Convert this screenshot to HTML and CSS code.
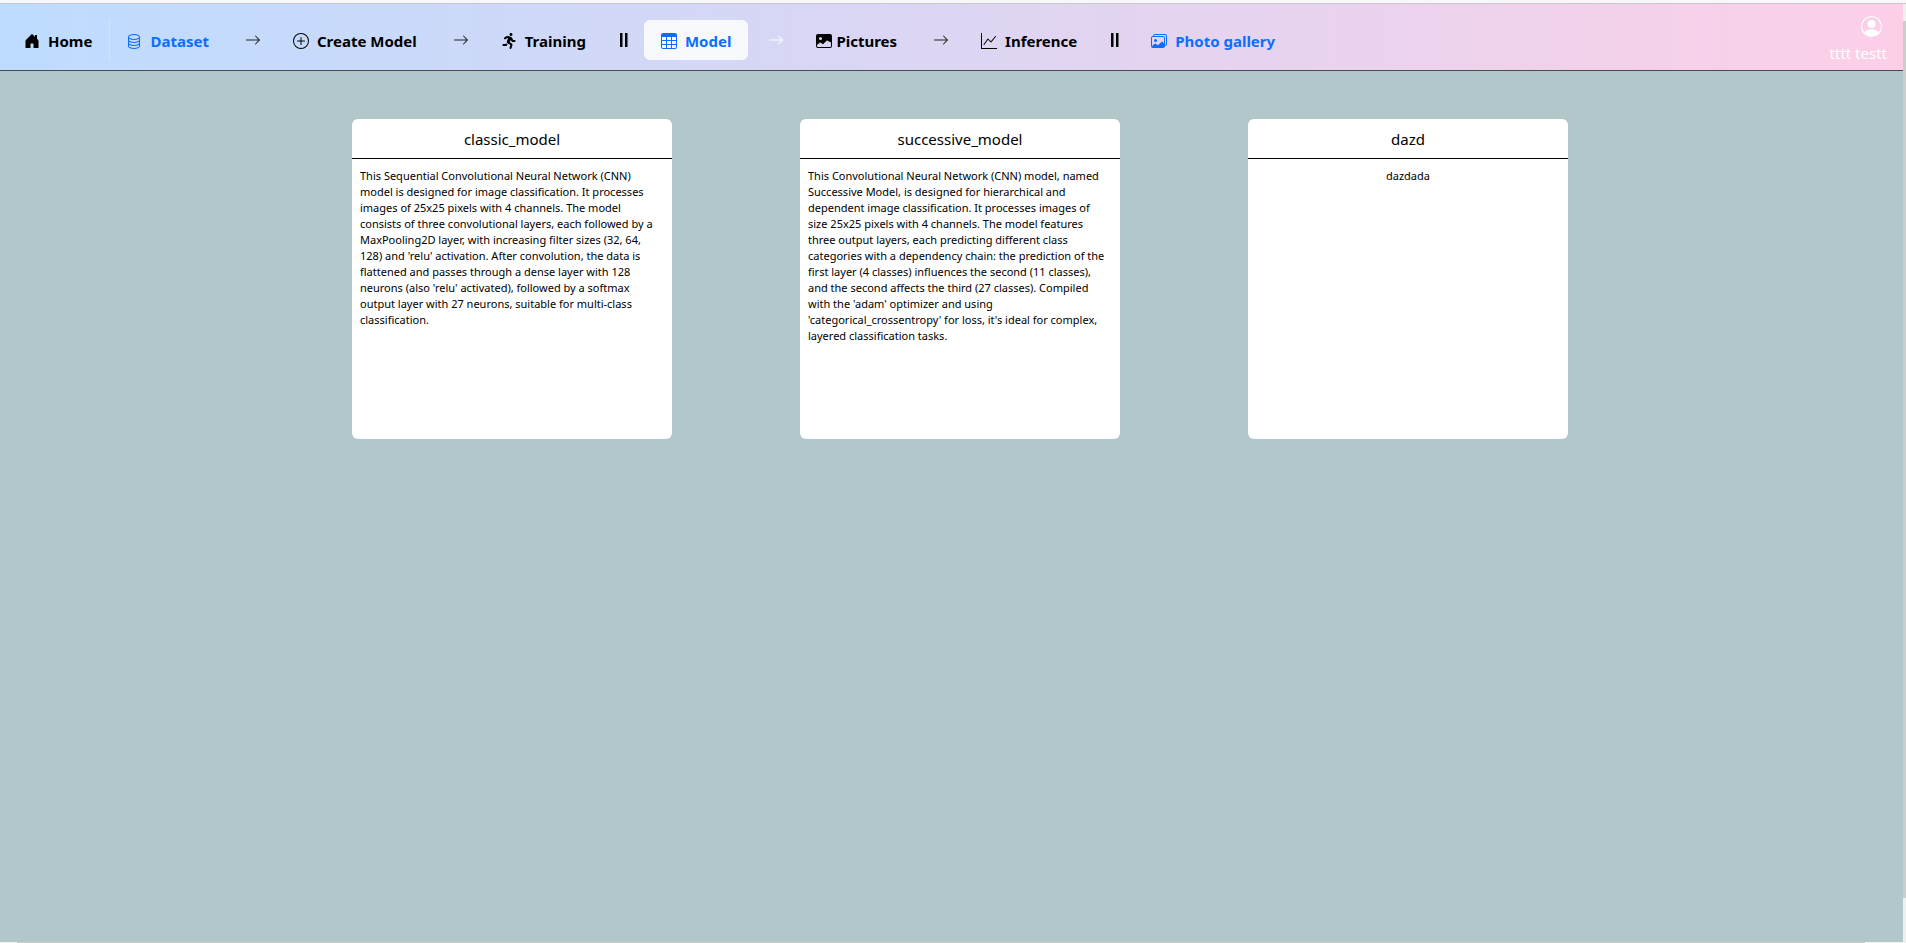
FILE: index.html
```html
<!DOCTYPE html>
<html lang="en">
<head>
<meta charset="utf-8">
<title>Models</title>
<link rel="stylesheet" href="styles.css">
</head>
<body>
<div class="topline"></div>
<div class="viewport">
<div class="page">
<header class="navbar">
  <nav class="nav">
    <a class="link home" href="#"><svg class="icon" viewBox="0 0 16 16"><path d="M6.5 14.5v-3.505c0-.245.25-.495.5-.495h2c.25 0 .5.25.5.5v3.5a.5.5 0 0 0 .5.5h4a.5.5 0 0 0 .5-.5v-7a.5.5 0 0 0-.146-.354L13 5.793V2.5a.5.5 0 0 0-.5-.5h-1a.5.5 0 0 0-.5.5v1.293L8.354 1.146a.5.5 0 0 0-.708 0l-6 6A.5.5 0 0 0 1.5 7.5v7a.5.5 0 0 0 .5.5h4a.5.5 0 0 0 .5-.5Z"/></svg>Home</a>
    <a class="link blue" href="#"><svg class="icon" viewBox="0 0 16 16"><path d="M4.318 2.687C5.234 2.271 6.536 2 8 2s2.766.27 3.682.687C12.644 3.125 13 3.627 13 4c0 .374-.356.875-1.318 1.313C10.766 5.729 9.464 6 8 6s-2.766-.27-3.682-.687C3.356 4.875 3 4.373 3 4c0-.374.356-.875 1.318-1.313ZM13 5.698V7c0 .374-.356.875-1.318 1.313C10.766 8.729 9.464 9 8 9s-2.766-.27-3.682-.687C3.356 7.875 3 7.373 3 7V5.698c.271.202.58.378.904.525C4.978 6.711 6.427 7 8 7s3.022-.289 4.096-.777A4.92 4.92 0 0 0 13 5.698ZM14 4c0-1.007-.875-1.755-1.904-2.223C11.022 1.289 9.573 1 8 1s-3.022.289-4.096.777C2.875 2.245 2 2.993 2 4v9c0 1.007.875 1.755 1.904 2.223C4.978 15.71 6.427 16 8 16s3.022-.289 4.096-.777C13.125 14.755 14 14.007 14 13V4Zm-1 4.698V10c0 .374-.356.875-1.318 1.313C10.766 11.729 9.464 12 8 12s-2.766-.27-3.682-.687C3.356 10.875 3 10.373 3 10V8.698c.271.202.58.378.904.525C4.978 9.71 6.427 10 8 10s3.022-.289 4.096-.777A4.92 4.92 0 0 0 13 8.698Zm0 3V13c0 .374-.356.875-1.318 1.313C10.766 14.729 9.464 15 8 15s-2.766-.27-3.682-.687C3.356 13.875 3 13.373 3 13v-1.302c.271.202.58.378.904.525C4.978 12.71 6.427 13 8 13s3.022-.289 4.096-.777c.324-.147.633-.323.904-.525Z"/></svg>Dataset</a>
    <svg class="icon arrow" viewBox="0 0 16 16"><path fill-rule="evenodd" d="M1 8a.5.5 0 0 1 .5-.5h11.793l-3.147-3.146a.5.5 0 0 1 .708-.708l4 4a.5.5 0 0 1 0 .708l-4 4a.5.5 0 0 1-.708-.708L13.293 8.5H1.5A.5.5 0 0 1 1 8"/></svg>
    <a class="link" href="#"><svg class="icon" viewBox="0 0 16 16"><path d="M8 15A7 7 0 1 1 8 1a7 7 0 0 1 0 14m0 1A8 8 0 1 0 8 0a8 8 0 0 0 0 16"/><path d="M8 4a.5.5 0 0 1 .5.5v3h3a.5.5 0 0 1 0 1h-3v3a.5.5 0 0 1-1 0v-3h-3a.5.5 0 0 1 0-1h3v-3A.5.5 0 0 1 8 4"/></svg>Create Model</a>
    <svg class="icon arrow" viewBox="0 0 16 16"><path fill-rule="evenodd" d="M1 8a.5.5 0 0 1 .5-.5h11.793l-3.147-3.146a.5.5 0 0 1 .708-.708l4 4a.5.5 0 0 1 0 .708l-4 4a.5.5 0 0 1-.708-.708L13.293 8.5H1.5A.5.5 0 0 1 1 8"/></svg>
    <a class="link" href="#"><svg class="icon" viewBox="0 0 416 512"><path d="M272 96c26.510 0 48-21.490 48-48S298.510 0 272 0s-48 21.490-48 48 21.490 48 48 48zM113.690 317.470l-14.800 34.520H32c-17.670 0-32 14.330-32 32s14.330 32 32 32h77.450c19.250 0 36.580-11.440 44.110-29.090l8.790-20.520-10.670-6.300c-17.320-10.230-30.060-25.370-37.990-42.610zM384 223.990h-44.030l-26.060-53.250c-12.500-25.550-35.450-44.230-61.780-50.940l-71.080-21.140c-28.300-6.800-57.770-.55-80.840 17.140l-39.670 30.410c-14.030 10.750-16.690 30.830-5.920 44.860s30.840 16.660 44.860 5.920l39.690-30.410c7.670-5.890 17.440-8 25.270-6.140l14.700 4.370-37.460 87.390c-12.620 29.480-1.310 64.010 26.300 80.310l84.980 50.170-27.470 87.730c-5.280 16.860 4.110 34.810 20.970 40.090 3.190 1 6.410 1.480 9.580 1.480 13.610 0 26.230-8.770 30.520-22.450l31.640-101.060c5.910-20.770-2.890-43.080-21.640-54.390l-61.240-36.140 31.310-78.280 20.270 41.430c8 16.340 24.920 26.890 43.110 26.890H384c17.670 0 32-14.330 32-32s-14.330-31.990-32-31.990z"/></svg>Training</a>
    <svg class="icon pause" viewBox="0 0 16 16"><path d="M4 1h2.500v14H4zM9 1h2.500v14H9z"/></svg>
    <a class="link blue active" href="#" aria-current="page"><svg class="icon" viewBox="0 0 16 16"><path d="M0 2a2 2 0 0 1 2-2h12a2 2 0 0 1 2 2v12a2 2 0 0 1-2 2H2a2 2 0 0 1-2-2zm15 2h-4v3h4zm0 4h-4v3h4zm0 4h-4v3h3a1 1 0 0 0 1-1zm-5 3v-3H6v3zm-5 0v-3H1v2a1 1 0 0 0 1 1zm-4-4h4V8H1zm0-4h4V4H1zm5-3v3h4V4zm4 4H6v3h4z"/></svg>Model</a>
    <svg class="icon arrow white" viewBox="0 0 16 16"><path fill-rule="evenodd" d="M1 8a.5.5 0 0 1 .5-.5h11.793l-3.147-3.146a.5.5 0 0 1 .708-.708l4 4a.5.5 0 0 1 0 .708l-4 4a.5.5 0 0 1-.708-.708L13.293 8.5H1.5A.5.5 0 0 1 1 8"/></svg>
    <a class="link tight" href="#"><svg class="icon" viewBox="0 0 16 16"><path d="M.002 3a2 2 0 0 1 2-2h12a2 2 0 0 1 2 2v10a2 2 0 0 1-2 2h-12a2 2 0 0 1-2-2zm1 9v1a1 1 0 0 0 1 1h12a1 1 0 0 0 1-1V9.500l-3.777-1.947a.5.5 0 0 0-.577.093l-3.710 3.710-2.660-1.772a.5.5 0 0 0-.630.062zm5-6.500a1.500 1.500 0 1 0-3 0 1.500 1.500 0 0 0 3 0"/></svg>Pictures</a>
    <svg class="icon arrow" viewBox="0 0 16 16"><path fill-rule="evenodd" d="M1 8a.5.5 0 0 1 .5-.5h11.793l-3.147-3.146a.5.5 0 0 1 .708-.708l4 4a.5.5 0 0 1 0 .708l-4 4a.5.5 0 0 1-.708-.708L13.293 8.5H1.5A.5.5 0 0 1 1 8"/></svg>
    <a class="link" href="#"><svg class="icon" viewBox="0 0 16 16"><path fill-rule="evenodd" d="M0 0h1v15h15v1H0zm14.817 3.113a.5.5 0 0 1 .070.704l-4.500 5.500a.5.5 0 0 1-.740.037L7.060 6.767l-3.656 5.027a.5.5 0 0 1-.808-.588l4-5.500a.5.5 0 0 1 .758-.060l2.609 2.610 4.150-5.073a.5.5 0 0 1 .704-.070"/></svg>Inference</a>
    <svg class="icon pause" viewBox="0 0 16 16"><path d="M4 1h2.500v14H4zM9 1h2.500v14H9z"/></svg>
    <a class="link blue" href="#"><svg class="icon" viewBox="0 0 16 16"><path d="M4.502 9a1.500 1.500 0 1 0 0-3 1.500 1.500 0 0 0 0 3"/><path d="M14.002 13a2 2 0 0 1-2 2h-10a2 2 0 0 1-2-2V5A2 2 0 0 1 2 3a2 2 0 0 1 2-2h10a2 2 0 0 1 2 2v8a2 2 0 0 1-1.998 2M14 2H4a1 1 0 0 0-1 1h9.002a2 2 0 0 1 2 2v7A1 1 0 0 0 15 11V3a1 1 0 0 0-1-1M2.002 4a1 1 0 0 0-1 1v8l2.646-2.354a.5.5 0 0 1 .630-.062l2.660 1.773 3.710-3.710a.5.5 0 0 1 .577-.094l1.777 1.947V5a1 1 0 0 0-1-1z"/></svg>Photo gallery</a>
  </nav>
  <a class="user" href="#"><svg class="avatar" viewBox="0 0 16 16"><path d="M11 6a3 3 0 1 1-6 0 3 3 0 0 1 6 0"/><path fill-rule="evenodd" d="M0 8a8 8 0 1 1 16 0A8 8 0 0 1 0 8m8-7a7 7 0 0 0-5.468 11.370C3.242 11.226 4.805 10 8 10s4.757 1.225 5.468 2.370A7 7 0 0 0 8 1"/></svg>tttt testt</a>
</header>
<main class="cards">
  <article class="card">
    <h2 class="card-title">classic_model</h2>
    <p class="card-text">This Sequential Convolutional Neural Network (CNN)<br>model is designed for image classification. It processes<br>images of 25x25 pixels with 4 channels. The model<br>consists of three convolutional layers, each followed by a<br>MaxPooling2D layer, with increasing filter sizes (32, 64,<br>128) and 'relu' activation. After convolution, the data is<br>flattened and passes through a dense layer with 128<br>neurons (also 'relu' activated), followed by a softmax<br>output layer with 27 neurons, suitable for multi-class<br>classification.</p>
  </article>
  <article class="card">
    <h2 class="card-title">successive_model</h2>
    <p class="card-text">This Convolutional Neural Network (CNN) model, named<br>Successive Model, is designed for hierarchical and<br>dependent image classification. It processes images of<br>size 25x25 pixels with 4 channels. The model features<br>three output layers, each predicting different class<br>categories with a dependency chain: the prediction of the<br>first layer (4 classes) influences the second (11 classes),<br>and the second affects the third (27 classes). Compiled<br>with the 'adam' optimizer and using<br>'categorical_crossentropy' for loss, it's ideal for complex,<br>layered classification tasks.</p>
  </article>
  <article class="card">
    <h2 class="card-title">dazd</h2>
    <p class="card-text short">dazdada</p>
  </article>
</main>
</div>
<div class="vbar"><div class="vthumb"></div></div>
</div>
<div class="hbar"><div class="hthumb"></div></div>
</body>
</html>
```
FILE: styles.css
```css
* { box-sizing: border-box; }
body {
  margin: 0;
  height: 100vh;
  display: flex;
  flex-direction: column;
  overflow: hidden;
  background: #b2c7ca;
  color: #000;
  font-family: "Noto Sans", "Open Sans", sans-serif;
  font-size: 15px;
}
.topline { flex: none; height: 4px; background: #f8f8fa; border-bottom: 1px solid #c8c8cc; }
.viewport { flex: 1; min-height: 0; display: flex; }
.page { flex: 1; min-width: 0; }
.navbar {
  height: 67px;
  display: flex;
  align-items: center;
  justify-content: space-between;
  padding: 8px 16px 2px 8px;
  background: linear-gradient(90deg, #bddcff, #fccfe7);
  border-bottom: 1px solid #4a4a55;
}
.nav { display: flex; align-items: center; height: 40px; }
.link {
  display: flex;
  align-items: center;
  gap: 8px;
  height: 40px;
  padding: 2px 16px 0;
  border-radius: 6px;
  color: #000;
  font-weight: 700;
  white-space: nowrap;
  text-decoration: none;
}
.tight { gap: 4px; }
.link.home { padding-right: 17px; border-right: 1px solid #dee2e6; border-radius: 0; }
.link.blue { color: #0d6efd; }
.link.active { padding: 2px 17px 0; background: #f8f9fc; }
.icon { flex: none; width: 16px; height: 16px; fill: currentColor; }
.arrow { margin: 0 16px 0 20px; color: #222; }
.white { color: #fff; }
.pause { margin: 0 12px 0 14px; }
.user {
  display: flex;
  flex-direction: column;
  align-items: flex-end;
  gap: 4px;
  color: #fff;
  font-size: 15px;
  line-height: 24px;
  text-decoration: none;
}
.avatar { width: 21px; height: 21px; margin-right: 5px; fill: currentColor; }
.cards {
  display: flex;
  flex-wrap: wrap;
  justify-content: center;
  gap: 64px 128px;
  padding: 48px 0 48px 17px;
}
.card { width: 320px; height: 320px; background: #fff; border-radius: 6px; }
.card-title {
  margin: 0;
  height: 40px;
  border-bottom: 1px solid #000;
  font-size: 15px;
  font-weight: 400;
  line-height: 40px;
  text-align: center;
}
.card-text {
  margin: 0;
  padding: 9px 8px;
  font-size: 11px;
  line-height: 16px;
}
.short { text-align: center; }
.vbar { flex: none; width: 3px; padding: 17px 0 44px; background: #f0f0f0; }
.vthumb { height: 100%; background: #cdcdcd; }
.hbar { flex: none; height: 1px; padding: 0 41px 0 17px; background: #f0f0f0; }
.hthumb { height: 100%; background: #cdcdcd; }
```
